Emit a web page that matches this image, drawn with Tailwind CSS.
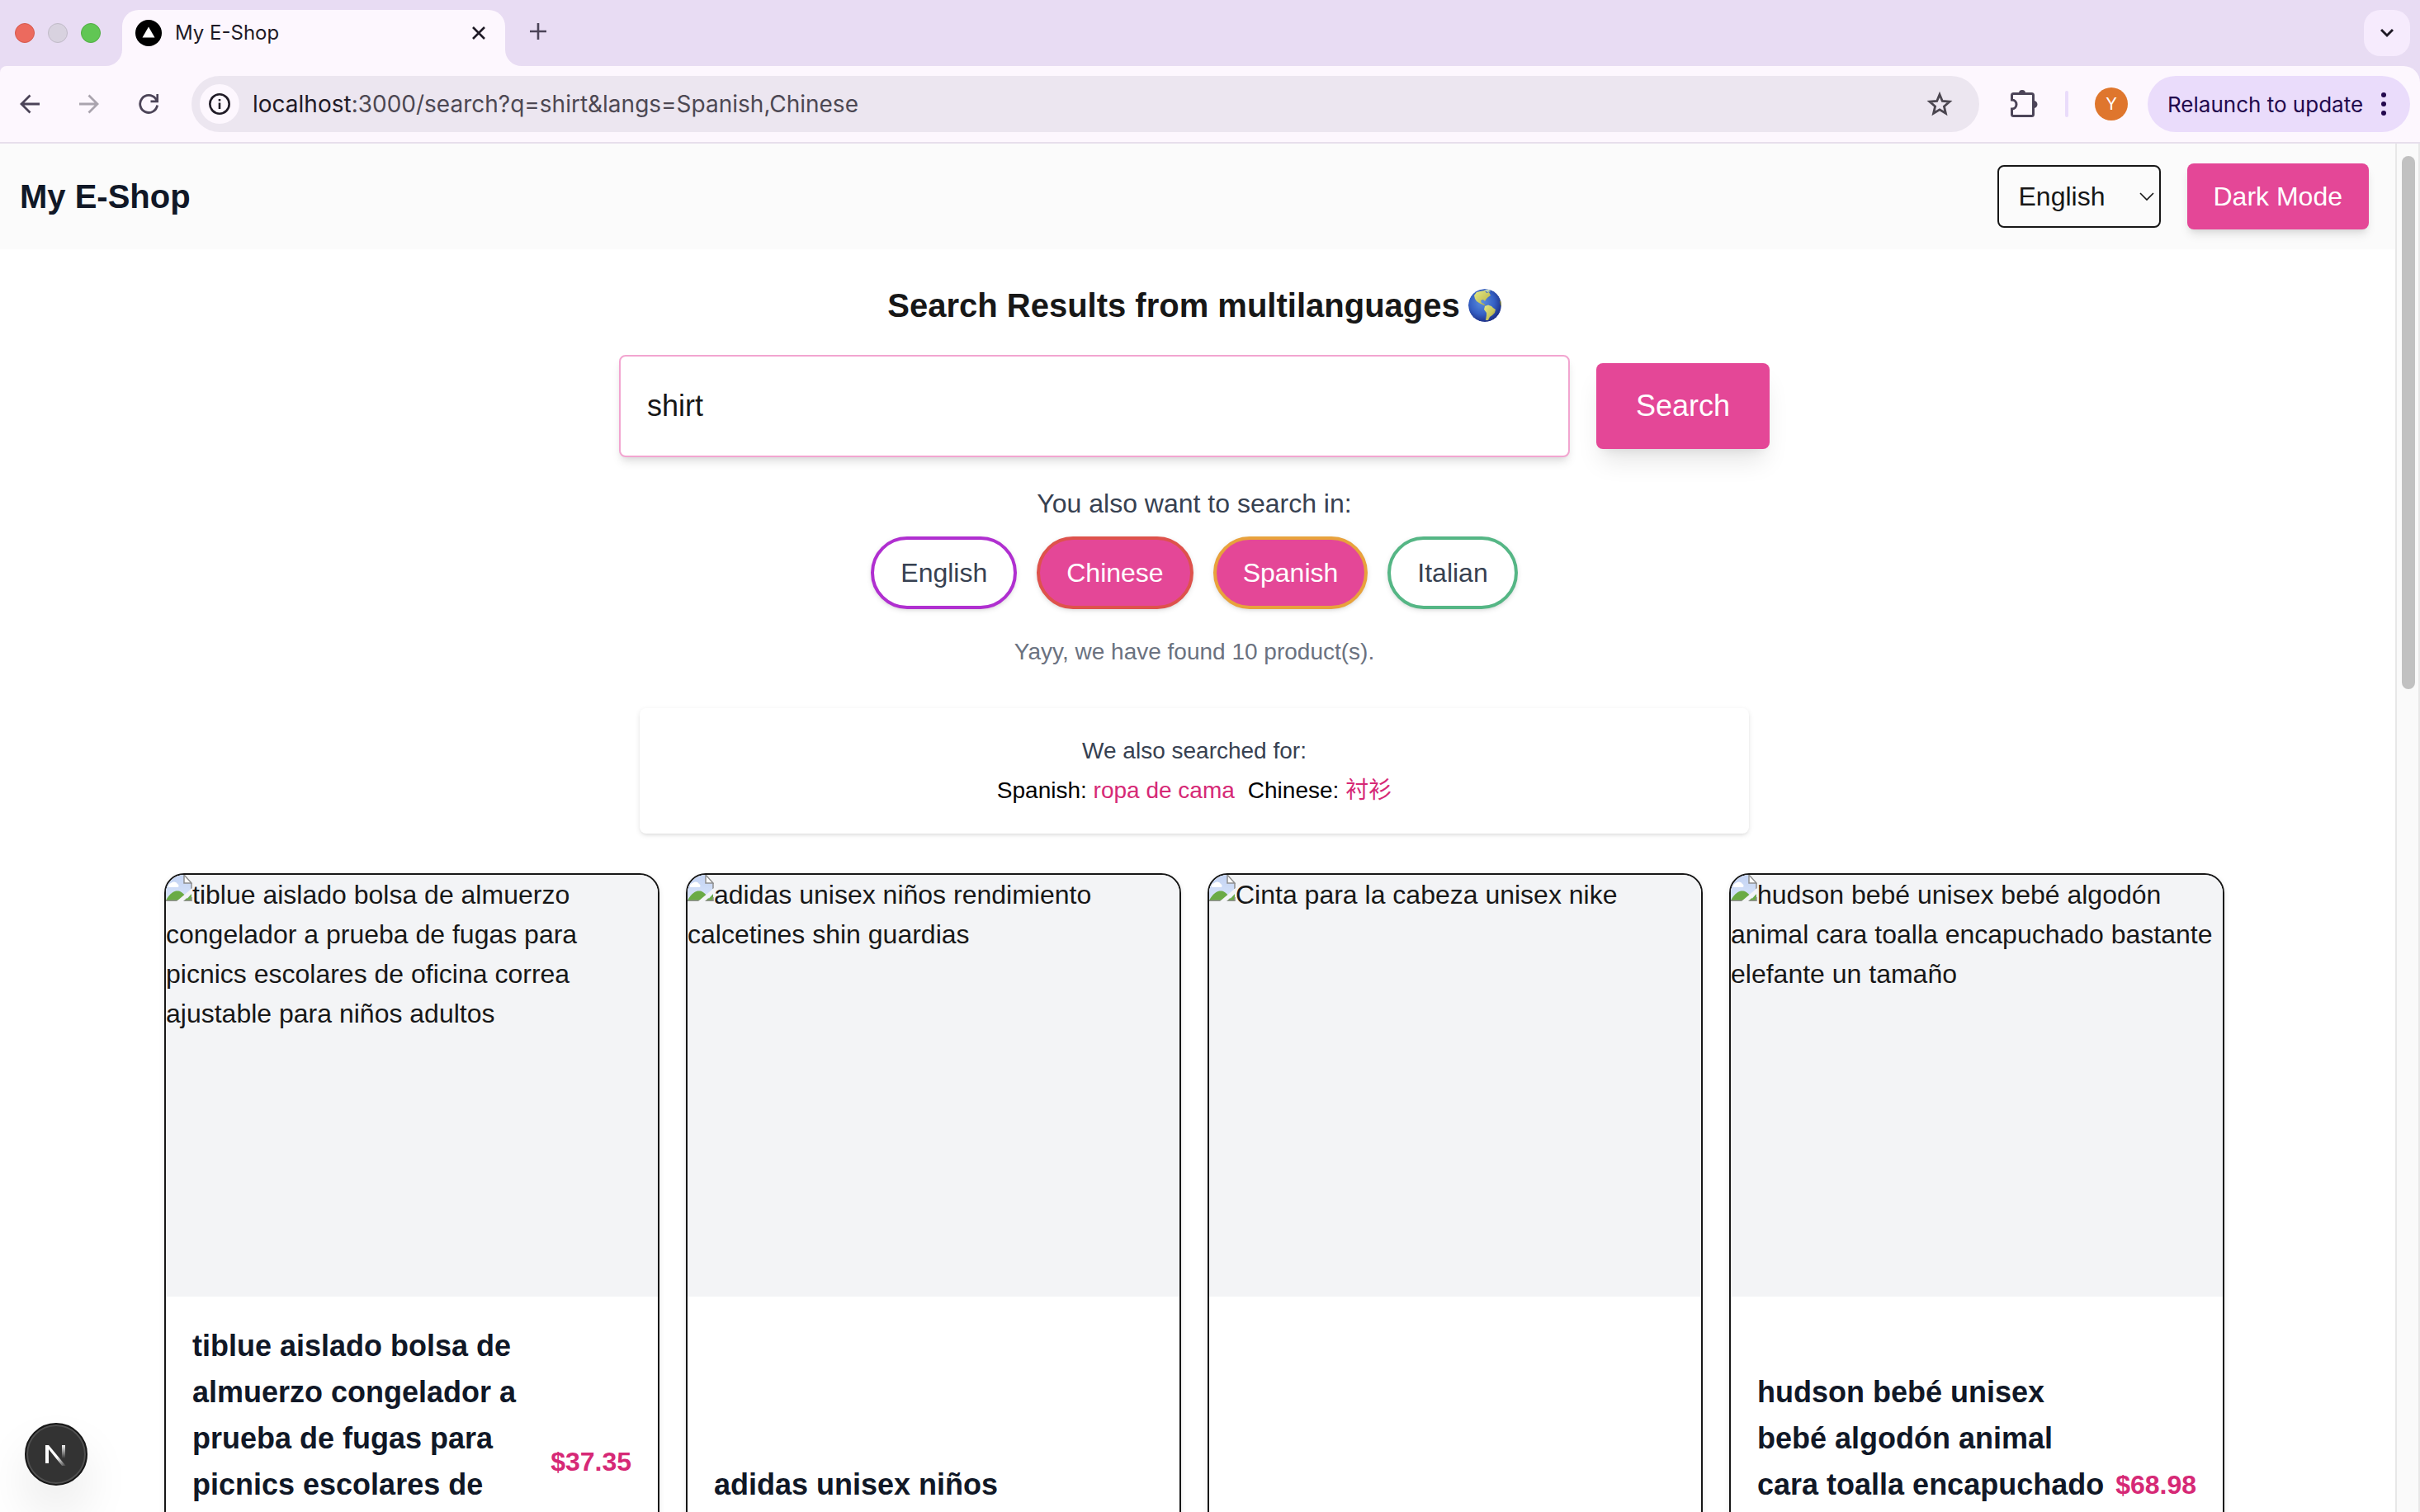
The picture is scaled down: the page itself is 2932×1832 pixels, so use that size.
<!DOCTYPE html>
<html lang="en">
<head>
<meta charset="utf-8">
<title>My E-Shop</title>
<script src="https://cdn.jsdelivr.net/npm/@tailwindcss/browser@4"></script>
</head>
<body class="bg-white font-['Liberation_Sans','Noto_Sans_CJK_SC',sans-serif] text-[#171717]">
<svg class="absolute size-0" aria-hidden="true">
  <defs>
    <linearGradient id="sky" x1="0" y1="0" x2="0" y2="1"><stop offset="0" stop-color="#c3d3f3"/><stop offset="1" stop-color="#d9e5fa"/></linearGradient>
    <symbol id="missing" viewBox="0 0 32 32">
      <path d="M0 0H22L31 10V32H0Z" fill="url(#sky)"/>
      <path d="M3 15a4 4 0 0 1 3-5 5 5 0 0 1 8 1 3 3 0 0 1 1 4Z" fill="#fff"/>
      <path d="M0 31C5 21 11 19 15 19.500s8 4 12 11.500Z" fill="#6aab45"/>
      <path d="M24 31L31 23V31Z" fill="#6aab45"/>
      <path d="M22 0V10H31Z" fill="#fff" stroke="#8f8f8f" stroke-width="1.500"/>
      <path d="M31 10V17M0 31.300H31V27" fill="none" stroke="#8f8f8f" stroke-width="1.500"/>
      <path d="M32 16V22L21 32H13Z" fill="#f3f4f6"/>
    </symbol>
  </defs>
</svg>

<div class="relative flex h-screen flex-col overflow-hidden">
  <!-- Browser chrome -->
  <div class="shrink-0 bg-[#e8dcf3] font-[Inter,sans-serif]">
    <div class="flex h-20 items-end">
      <div class="flex h-20 w-32 items-center gap-4 pl-[18px]">
        <span class="size-6 rounded-full border border-[#d5594c] bg-[#ec6a5e]"></span>
        <span class="size-6 rounded-full border border-[#c0bac7] bg-[#d8d2df]"></span>
        <span class="size-6 rounded-full border border-[#50ad42] bg-[#61c654]"></span>
      </div>
      <svg class="size-5" viewBox="0 0 20 20" fill="#fdf7fe"><path d="M20 0V20H0A20 20 0 0 0 20 0Z"/></svg>
      <div class="flex h-[68px] w-[464px] items-center rounded-t-[20px] bg-[#fdf7fe] pr-6 pb-3 pl-4">
        <svg class="size-8" viewBox="0 0 32 32"><circle cx="16" cy="16" r="16"/><path d="M16 8.500L23.500 21.500H8.500Z" fill="#fff"/></svg>
        <span class="ml-4 flex-1 text-2xl text-[#1f1a26]">My E-Shop</span>
        <button class="size-4" aria-label="Close tab"><svg class="size-4" viewBox="0 0 16 16" fill="none" stroke="#1f1a26" stroke-width="2.600"><path d="M1 1L15 15M15 1L1 15"/></svg></button>
      </div>
      <svg class="size-5" viewBox="0 0 20 20" fill="#fdf7fe"><path d="M0 0V20H20A20 20 0 0 1 0 0Z"/></svg>
      <button class="mb-8 ml-[10px] size-5" aria-label="New tab"><svg class="size-5" viewBox="0 0 20 20" fill="none" stroke="#4c4458" stroke-width="2.600"><path d="M10 0V20M0 10H20"/></svg></button>
      <button class="mr-3 mb-3 ml-auto flex size-14 items-center justify-center rounded-[20px] bg-[#f6ebfd]" aria-label="Search tabs"><svg class="h-3 w-4" viewBox="0 0 16 12" fill="none" stroke="#1f1a26" stroke-width="3"><path d="M1 2L8 9L15 2"/></svg></button>
    </div>
    <div class="flex h-[94px] items-center rounded-tl-lg rounded-tr-[20px] border-b-2 border-[#e7dfec] bg-[#fdf7fe] pr-3 pl-6">
      <button class="size-6" aria-label="Back"><svg class="size-6" viewBox="0 0 24 24" fill="none" stroke="#4c4458" stroke-width="2.800"><path d="M24 12H2M12.500 1.500L2 12L12.500 22.500"/></svg></button>
      <button class="ml-12 size-6" aria-label="Forward"><svg class="size-6" viewBox="0 0 24 24" fill="none" stroke="#aaa4ae" stroke-width="2.800"><path d="M0 12H22M11.500 1.500L22 12L11.500 22.500"/></svg></button>
      <button class="ml-12 size-6" aria-label="Reload"><svg class="size-6" viewBox="0 0 24 24" fill="none" stroke="#4c4458" stroke-width="2.800"><path d="M22.600 13.500A10.500 10.500 0 1 1 20.500 5.500L22.600 8M22.800 0V8.800H14.500"/></svg></button>
      <div class="ml-10 flex h-[68px] flex-1 items-center rounded-full bg-[#ece6f0] pr-8 pl-[10px]">
        <span class="flex size-12 items-center justify-center rounded-full bg-[#fdf7fe]"><svg class="size-[26px]" viewBox="0 0 26 26" fill="none" stroke="#1f1a26" stroke-width="2.600"><circle cx="13" cy="13" r="11.700"/><path d="M13 11.500V19M13 7V9.600"/></svg></span>
        <span class="ml-4 flex-1 text-[28px] text-[#4d4853]"><span class="text-[#1f1a26]">localhost</span>:3000/search?q=shirt&amp;langs=Spanish,Chinese</span>
        <button class="size-8" aria-label="Bookmark this tab"><svg class="size-8" viewBox="0 0 32 32" fill="none" stroke="#4b4650" stroke-width="2.800"><path d="M16 4.500L19.300 12.500L28 13.200L21.400 18.900L23.400 27.300L16 22.800L8.600 27.300L10.600 18.900L4 13.200L12.700 12.500Z"/></svg></button>
      </div>
      <button class="ml-9 size-9" aria-label="Extensions"><svg class="size-9" viewBox="0 0 36 36"><path d="M14 5.500H5.500A2 2 0 0 0 3.500 7.500V13A5.500 5.500 0 0 1 3.500 24V30.500A2 2 0 0 0 5.500 32.500H27.500A2 2 0 0 0 29.500 30.500V7.500A2 2 0 0 0 27.500 5.500Z" fill="none" stroke="#4c4458" stroke-width="3"/><path d="M12 5A4 4 0 0 1 20 5ZM30 14A4.500 4.500 0 0 1 30 23Z" fill="#4c4458"/></svg></button>
      <span class="ml-8 h-8 w-1 rounded-full bg-[#eadcfb]"></span>
      <span class="ml-8 flex size-10 items-center justify-center rounded-full bg-[#df762d] text-xl text-white">Y</span>
      <button class="ml-6 flex h-[68px] w-[318px] items-center rounded-full bg-[#eadcfb] pl-6 text-[26px] whitespace-nowrap text-[#23084d]">Relaunch to update<svg class="mr-7 ml-auto h-7 w-2" viewBox="0 0 8 28" fill="#23084d"><circle cx="4" cy="3" r="3"/><circle cx="4" cy="14" r="3"/><circle cx="4" cy="25" r="3"/></svg></button>
    </div>
  </div>

  <div class="flex min-h-0 flex-1">
    <div class="min-w-0 flex-1 overflow-hidden">
      <header class="flex h-32 items-center bg-[#fbfbfb] pr-8 pl-6">
        <a href="#" class="text-[40px] font-bold text-[#111827]">My E-Shop</a>
        <div class="relative ml-auto">
          <select aria-label="Language" class="block h-[76px] w-[198px] appearance-none rounded-lg border-2 border-[#171717] bg-transparent pl-6 text-[32px]"><option>English</option><option>Chinese</option><option>Spanish</option><option>Italian</option></select>
          <svg class="pointer-events-none absolute top-8 right-2 h-3 w-[18px]" viewBox="0 0 18 12" fill="none" stroke="#171717" stroke-width="1.600"><path d="M1 2L9 10L17 2"/></svg>
        </div>
        <button class="ml-8 h-20 rounded-lg bg-[#e44797] px-8 text-[32px] text-white shadow-[0_8px_12px_-2px_rgba(0,0,0,0.1),0_4px_8px_-4px_rgba(0,0,0,0.1)]">Dark Mode</button>
      </header>

      <main class="flex flex-col items-center pt-10 pr-2">
        <h1 class="flex items-center gap-2.5 text-[40px] leading-14 font-bold">Search Results from multilanguages
          <svg class="size-10" viewBox="0 0 40 40" role="img" aria-label="Globe">
            <defs>
              <radialGradient id="sea" cx=".42" cy=".4" r=".62"><stop offset="0" stop-color="#5b8fdf"/><stop offset=".6" stop-color="#3560c4"/><stop offset="1" stop-color="#1d2f86"/></radialGradient>
              <linearGradient id="land" x1="0" y1="0" x2="1" y2="1"><stop offset="0" stop-color="#e3ea86"/><stop offset=".6" stop-color="#c8c65c"/><stop offset="1" stop-color="#8a7c30"/></linearGradient>
              <clipPath id="disc"><circle cx="20" cy="20" r="20"/></clipPath>
            </defs>
            <g clip-path="url(#disc)">
              <circle cx="20" cy="20" r="20" fill="url(#sea)"/>
              <path d="M7 8L10 4L14 3L20 2L22 5L25 4L27 8L24 10L22 12L20 15L18 13L15 14L16 17L19 18L21 21L17 19L13 17L10 15L8 12Z" fill="url(#land)"/>
              <path d="M19 1L25 1L27 3L23 4Z" fill="#bcd5b0"/>
              <path d="M20 21L24 19.500L28 21L30 23L33 25L32 29L29 32L26 34L24 38L21 38L22 32L22 29L19 25Z" fill="url(#land)"/>
              <path d="M38 15L41 14V22L39 20Z" fill="#8a8a3a"/>
            </g>
          </svg>
        </h1>

        <form class="mt-8 flex w-full max-w-[1394px] items-center gap-8" onsubmit="return false">
          <input type="text" aria-label="Search products" value="shirt" class="h-[124px] min-w-0 flex-1 rounded-lg border-2 border-[#f2a5d0] bg-white px-8 text-4xl shadow-[0_8px_12px_-2px_rgba(0,0,0,0.1),0_4px_8px_-4px_rgba(0,0,0,0.1)]">
          <button class="h-[104px] rounded-lg bg-[#e44797] px-12 text-4xl text-white shadow-[0_20px_30px_-6px_rgba(0,0,0,0.1),0_8px_12px_-8px_rgba(0,0,0,0.1)]">Search</button>
        </form>

        <p class="mt-8 text-[32px] leading-12 text-[#374151]">You also want to search in:</p>
        <div class="mt-4 flex gap-6 text-[32px] text-[#374151]">
          <button aria-pressed="false" class="h-[88px] rounded-full border-4 border-[#b02fd0] bg-white px-8 shadow-[0_2px_6px_rgba(0,0,0,0.1),0_2px_4px_-2px_rgba(0,0,0,0.1)]">English</button>
          <button aria-pressed="true" class="h-[88px] rounded-full border-4 border-[#de524c] bg-[#e44797] px-8 text-white shadow-[0_2px_6px_rgba(0,0,0,0.1),0_2px_4px_-2px_rgba(0,0,0,0.1)]">Chinese</button>
          <button aria-pressed="true" class="h-[88px] rounded-full border-4 border-[#e8a23c] bg-[#e44797] px-8 text-white shadow-[0_2px_6px_rgba(0,0,0,0.1),0_2px_4px_-2px_rgba(0,0,0,0.1)]">Spanish</button>
          <button aria-pressed="false" class="h-[88px] rounded-full border-4 border-[#55b685] bg-white px-8 shadow-[0_2px_6px_rgba(0,0,0,0.1),0_2px_4px_-2px_rgba(0,0,0,0.1)]">Italian</button>
        </div>
        <p class="mt-8 text-[28px] leading-10 text-[#6b7280]">Yayy, we have found 10 product(s).</p>

        <section class="mt-12 flex w-full max-w-[1344px] flex-col items-center gap-2 rounded-lg bg-white py-8 text-[28px] leading-10 text-black shadow-[0_2px_6px_rgba(0,0,0,0.1),0_2px_4px_-2px_rgba(0,0,0,0.1)]">
          <p class="text-[#374151]">We also searched for:</p>
          <p class="flex gap-4"><span>Spanish: <span class="text-[#d62976]">ropa de cama</span></span><span>Chinese: <span lang="zh" class="text-[#d62976]">衬衫</span></span></p>
        </section>

        <section class="mt-12 grid w-full max-w-[2496px] grid-cols-4 gap-8">
          <article class="flex flex-col overflow-hidden rounded-3xl border-2 border-[#171717] shadow-[0_2px_6px_rgba(0,0,0,0.1)]">
            <div class="h-[511px] shrink-0 bg-[#f3f4f6] text-[32px] leading-12"><svg class="inline size-8 align-top"><use href="#missing"/></svg>tiblue aislado bolsa de almuerzo congelador a prueba de fugas para picnics escolares de oficina correa ajustable para niños adultos</div>
            <div class="mt-auto flex items-center justify-between p-8">
              <h2 class="text-4xl leading-14 font-bold text-[#111827]">tiblue aislado bolsa de almuerzo congelador a prueba de fugas para picnics escolares de oficina correa ajustable para niños adultos</h2>
              <span class="text-[32px] font-bold text-[#d62976]">$37.35</span>
            </div>
          </article>
          <article class="flex flex-col overflow-hidden rounded-3xl border-2 border-[#171717] shadow-[0_2px_6px_rgba(0,0,0,0.1)]">
            <div class="h-[511px] shrink-0 bg-[#f3f4f6] text-[32px] leading-12"><svg class="inline size-8 align-top"><use href="#missing"/></svg>adidas unisex niños rendimiento calcetines shin guardias</div>
            <div class="mt-auto flex items-center justify-between p-8">
              <h2 class="text-4xl leading-14 font-bold text-[#111827]">adidas unisex niños rendimiento calcetines shin guardias</h2>
            </div>
          </article>
          <article class="flex flex-col overflow-hidden rounded-3xl border-2 border-[#171717] shadow-[0_2px_6px_rgba(0,0,0,0.1)]">
            <div class="h-[511px] shrink-0 bg-[#f3f4f6] text-[32px] leading-12"><svg class="inline size-8 align-top"><use href="#missing"/></svg>Cinta para la cabeza unisex nike</div>
          </article>
          <article class="flex flex-col overflow-hidden rounded-3xl border-2 border-[#171717] shadow-[0_2px_6px_rgba(0,0,0,0.1)]">
            <div class="h-[511px] shrink-0 bg-[#f3f4f6] text-[32px] leading-12"><svg class="inline size-8 align-top"><use href="#missing"/></svg>hudson bebé unisex bebé algodón animal cara toalla encapuchado bastante elefante un tamaño</div>
            <div class="mt-auto flex items-center justify-between p-8">
              <h2 class="text-4xl leading-14 font-bold text-[#111827]">hudson bebé unisex bebé algodón animal cara toalla encapuchado bastante elefante un tamaño</h2>
              <span class="text-[32px] font-bold text-[#d62976]">$68.98</span>
            </div>
          </article>
        </section>
      </main>
    </div>
    <!-- Scrollbar -->
    <div class="w-[30px] shrink-0 border-r-2 border-l-2 border-[#e8e8e8] bg-[#fafafa] pt-[15px] pl-[6px]"><div class="h-[39.3%] w-4 rounded-full bg-[#c1c1c1]"></div></div>
  </div>

  <!-- Dev tools badge -->
  <button aria-label="Open Next.js Dev Tools" class="absolute bottom-8 left-[30px] flex size-[76px] items-center justify-center rounded-full border-2 border-[#171717] bg-[#333] shadow-[inset_0_0_0_2px_#505050,0_32px_64px_-8px_rgba(0,0,0,0.14)]">
    <svg class="size-7" viewBox="0 0 28 28" fill="none">
      <defs>
        <linearGradient id="diag" x1="16" y1="17" x2="26" y2="29" gradientUnits="userSpaceOnUse"><stop stop-color="#fff"/><stop offset="1" stop-color="#fff" stop-opacity="0"/></linearGradient>
        <linearGradient id="stem" x1="0" y1="2" x2="0" y2="19" gradientUnits="userSpaceOnUse"><stop stop-color="#fff"/><stop offset="1" stop-color="#fff" stop-opacity="0"/></linearGradient>
      </defs>
      <path d="M1 3H5L26.500 29L23.500 31L5 8V25H1Z" fill="url(#diag)"/>
      <path d="M21 3H25V19H21Z" fill="url(#stem)"/>
    </svg>
  </button>
</div>
</body>
</html>
